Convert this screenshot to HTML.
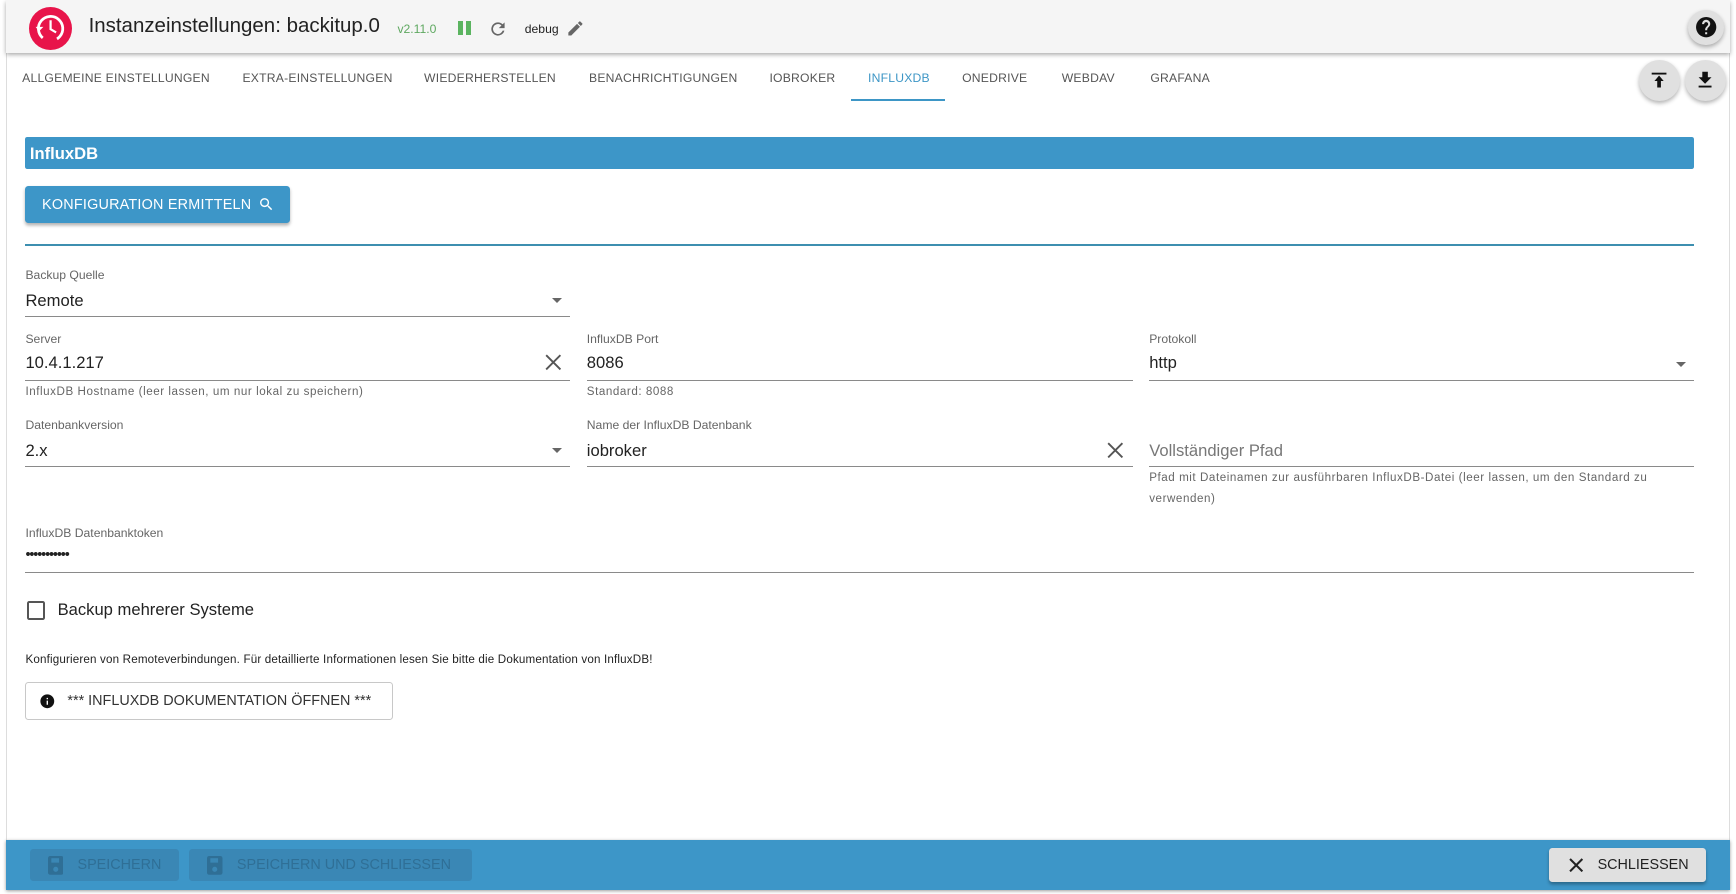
<!DOCTYPE html>
<html><head><meta charset="utf-8">
<style>
*{box-sizing:border-box;margin:0;padding:0}
html,body{width:1736px;height:894px;overflow:hidden;background:#fff}
body{zoom:1.10714;font-family:"Liberation Sans",Arial,sans-serif;color:#222;position:relative;width:1568px;height:807px}
.abs{position:absolute}
.card{position:absolute;left:5px;top:0;width:1558px;height:804px;border-left:1px solid #ddd;border-right:1px solid #ddd}
.hdr{position:absolute;left:5px;top:0;width:1558px;height:48px;background:#f5f5f5;box-shadow:0 2px 4px rgba(0,0,0,.35)}
.tab{position:absolute;top:64px;font-size:11px;color:#555;letter-spacing:.2px}
.lbl{position:absolute;font-size:11px;color:#666}
.val{position:absolute;font-size:15px;color:#222}
.line{position:absolute;height:1px;background:#8a8a8a}
.help{position:absolute;font-size:10.5px;color:#666;line-height:19px;letter-spacing:.5px}
.fab{position:absolute;border-radius:50%;background:#e0e0e0;box-shadow:0 2px 4px rgba(0,0,0,.3);display:flex;align-items:center;justify-content:center}
.arrow{position:absolute;width:0;height:0;border-left:5px solid transparent;border-right:5px solid transparent;border-top:5px solid #666}
</style></head><body>
<div class="card"></div>
<div class="hdr"></div>
<div class="abs" style="left:26px;top:6px;width:39px;height:39px;border-radius:50%;background:#e8144a">
<svg width="39" height="39" viewBox="0 0 39 39"><circle cx="19.5" cy="19.5" r="11" fill="none" stroke="#fff" stroke-width="2.5" stroke-dasharray="55 20" transform="rotate(130 19.5 19.5)"/><path d="M19.5 12v8l5 3" stroke="#fff" stroke-width="2" fill="none"/><path d="M6 18l3 4 4-4z" fill="#fff"/></svg></div>
<div class="abs" style="left:80px;top:13px;font-size:18.5px;color:#222">Instanzeinstellungen: backitup.0</div>
<div class="abs" style="left:359px;top:20px;font-size:11px;color:#5ea860">v2.11.0</div>
<div class="abs" style="left:414px;top:19px;width:4px;height:13px;background:#5bb460"></div>
<div class="abs" style="left:421px;top:19px;width:4px;height:13px;background:#5bb460"></div>
<svg class="abs" style="left:441px;top:17px" width="18" height="18" viewBox="0 0 24 24"><path d="M17.65 6.35A7.96 7.96 0 0 0 12 4a8 8 0 1 0 7.73 10h-2.08A6 6 0 1 1 12 6c1.66 0 3.14.69 4.22 1.78L13 11h7V4z" fill="#666"/></svg>
<div class="abs" style="left:474px;top:20px;font-size:11px;color:#222">debug</div>
<svg class="abs" style="left:511px;top:17px" width="17" height="17" viewBox="0 0 24 24"><path d="M3 17.25V21h3.75L17.81 9.94l-3.75-3.75zM20.71 7.04a1 1 0 0 0 0-1.41l-2.34-2.34a1 1 0 0 0-1.41 0l-1.83 1.83 3.75 3.75z" fill="#666"/></svg>
<div class="fab" style="left:1525px;top:9px;width:32px;height:32px"><svg width="22" height="22" viewBox="0 0 24 24"><path d="M12 2a10 10 0 1 0 0 20 10 10 0 0 0 0-20zm1 17h-2v-2h2zm2.07-7.75l-.9.92C13.45 12.9 13 13.5 13 15h-2v-.5c0-1.1.45-2.1 1.17-2.830l1.24-1.26A2 2 0 1 0 10 9H8a4 4 0 1 1 7.07 2.25z" fill="#111"/></svg></div>
<div class="tab" style="left:20px">ALLGEMEINE EINSTELLUNGEN</div>
<div class="tab" style="left:219px">EXTRA-EINSTELLUNGEN</div>
<div class="tab" style="left:383px">WIEDERHERSTELLEN</div>
<div class="tab" style="left:532px">BENACHRICHTIGUNGEN</div>
<div class="tab" style="left:695px">IOBROKER</div>
<div class="tab" style="left:784px;color:#3d96c6">INFLUXDB</div>
<div class="tab" style="left:869px">ONEDRIVE</div>
<div class="tab" style="left:959px">WEBDAV</div>
<div class="tab" style="left:1039px">GRAFANA</div>
<div class="abs" style="left:769px;top:89px;width:85px;height:2px;background:#3d96c6"></div>
<div class="fab" style="left:1480px;top:54px;width:37px;height:37px"><svg width="20" height="20" viewBox="0 0 24 24"><path d="M4 4h16v2H4z" fill="#111"/><path d="M7 13l5-6 5 6h-3v7h-4v-7z" fill="#111"/></svg></div>
<div class="fab" style="left:1522px;top:54px;width:37px;height:37px"><svg width="20" height="20" viewBox="0 0 24 24"><path d="M19 9h-4V3H9v6H5l7 7zM5 18v2h14v-2z" fill="#111"/></svg></div>

<div class="abs" style="left:23px;top:124px;width:1507px;height:29px;background:#3d96c8;border-radius:2px;color:#fff;font-weight:bold;font-size:15px;padding:6px 4px">InfluxDB</div>
<div class="abs" style="left:23px;top:168px;width:239px;height:33px;background:#3d96c8;border-radius:3px;box-shadow:0 2px 3px rgba(0,0,0,.3);color:#fff;font-size:13px;padding:10px 15px;letter-spacing:.2px">KONFIGURATION ERMITTELN
<svg style="position:absolute;left:210px;top:9px" width="15" height="15" viewBox="0 0 24 24"><path d="M15.5 14h-.79l-.28-.27A6.5 6.5 0 1 0 9.5 16a6.47 6.470 0 0 0 4.23-1.57l.27.28v.79l5 5 1.5-1.5zm-6 0a4.5 4.5 0 1 1 0-9 4.5 4.5 0 0 1 0 9z" fill="#fff"/></svg></div>
<div class="abs" style="left:23px;top:220px;width:1507px;height:2px;background:#3d8fb0"></div>

<div class="lbl" style="left:23px;top:242px">Backup Quelle</div>
<div class="val" style="left:23px;top:263px">Remote</div>
<div class="arrow" style="left:499px;top:269px"></div>
<div class="line" style="left:23px;top:285px;width:492px"></div>

<div class="lbl" style="left:23px;top:300px">Server</div>
<div class="val" style="left:23px;top:319px">10.4.1.217</div>
<svg class="abs" style="left:492px;top:320px" width="15" height="15" viewBox="0 0 14 14"><path d="M1 1l12 12M13 1L1 13" stroke="#555" stroke-width="1.6"/></svg>
<div class="line" style="left:23px;top:343px;width:492px"></div>
<div class="help" style="left:23px;top:344px">InfluxDB Hostname (leer lassen, um nur lokal zu speichern)</div>

<div class="lbl" style="left:530px;top:300px">InfluxDB Port</div>
<div class="val" style="left:530px;top:319px">8086</div>
<div class="line" style="left:530px;top:343px;width:493px"></div>
<div class="help" style="left:530px;top:344px">Standard: 8088</div>

<div class="lbl" style="left:1038px;top:300px">Protokoll</div>
<div class="val" style="left:1038px;top:319px">http</div>
<div class="arrow" style="left:1514px;top:327px"></div>
<div class="line" style="left:1038px;top:343px;width:492px"></div>

<div class="lbl" style="left:23px;top:378px">Datenbankversion</div>
<div class="val" style="left:23px;top:398px">2.x</div>
<div class="arrow" style="left:499px;top:405px"></div>
<div class="line" style="left:23px;top:421px;width:492px"></div>

<div class="lbl" style="left:530px;top:378px">Name der InfluxDB Datenbank</div>
<div class="val" style="left:530px;top:398px">iobroker</div>
<svg class="abs" style="left:1000px;top:399px" width="15" height="15" viewBox="0 0 14 14"><path d="M1 1l12 12M13 1L1 13" stroke="#555" stroke-width="1.6"/></svg>
<div class="line" style="left:530px;top:421px;width:493px"></div>

<div class="val" style="left:1038px;top:398px;color:#777">Vollständiger Pfad</div>
<div class="line" style="left:1038px;top:421px;width:492px"></div>
<div class="help" style="left:1038px;top:422px;width:470px">Pfad mit Dateinamen zur ausführbaren InfluxDB-Datei (leer lassen, um den Standard zu verwenden)</div>

<div class="lbl" style="left:23px;top:475px">InfluxDB Datenbanktoken</div>
<div class="val" style="left:23px;top:494px;font-size:13px;letter-spacing:-1px">•••••••••••</div>
<div class="line" style="left:23px;top:517px;width:1507px"></div>

<div class="abs" style="left:24px;top:543px;width:17px;height:17px;border:2px solid #555;border-radius:2px"></div>
<div class="abs" style="left:52px;top:542px;font-size:15px;color:#222">Backup mehrerer Systeme</div>

<div class="abs" style="left:23px;top:590px;font-size:10.5px;color:#222;letter-spacing:.15px">Konfigurieren von Remoteverbindungen. Für detaillierte Informationen lesen Sie bitte die Dokumentation von InfluxDB!</div>
<div class="abs" style="left:23px;top:616px;width:332px;height:34px;border:1px solid #c8c8c8;border-radius:3px;font-size:13px;color:#333;padding:9px 0 0 37px">*** INFLUXDB DOKUMENTATION ÖFFNEN ***
<svg style="position:absolute;left:11px;top:9px" width="15" height="15" viewBox="0 0 24 24"><path d="M12 2a10 10 0 1 0 0 20 10 10 0 0 0 0-20zm1 15h-2v-6h2zm0-8h-2V7h2z" fill="#111"/></svg></div>

<div class="abs" style="left:5px;top:759px;width:1558px;height:45px;background:#3d96c8;box-shadow:0 1px 3px rgba(0,0,0,.4)"></div>
<div class="abs" style="left:27px;top:767px;width:135px;height:29px;background:#3a87b5;border-radius:3px;color:#2f6f96;font-size:13px;padding:7px 0 0 43px">SPEICHERN
<svg style="position:absolute;left:16px;top:6px" width="14" height="17" viewBox="0 0 14 17"><rect width="14" height="17" rx="2" fill="#2f6f96"/><rect x="3" y="2" width="7" height="4" fill="#3a87b5"/><circle cx="7" cy="12" r="2.3" fill="#3a87b5"/></svg></div>
<div class="abs" style="left:171px;top:767px;width:255px;height:29px;background:#3a87b5;border-radius:3px;color:#2f6f96;font-size:13px;padding:7px 0 0 43px">SPEICHERN UND SCHLIESSEN
<svg style="position:absolute;left:16px;top:6px" width="14" height="17" viewBox="0 0 14 17"><rect width="14" height="17" rx="2" fill="#2f6f96"/><rect x="3" y="2" width="7" height="4" fill="#3a87b5"/><circle cx="7" cy="12" r="2.3" fill="#3a87b5"/></svg></div>
<div class="abs" style="left:1399px;top:766px;width:142px;height:31px;background:#e0e0e0;border-radius:3px;box-shadow:0 2px 3px rgba(0,0,0,.3);color:#222;font-size:13px;padding:8px 0 0 44px">SCHLIESSEN
<svg style="position:absolute;left:18px;top:9px" width="13" height="13" viewBox="0 0 14 14"><path d="M1 1l12 12M13 1L1 13" stroke="#222" stroke-width="2"/></svg></div>
</body></html>
